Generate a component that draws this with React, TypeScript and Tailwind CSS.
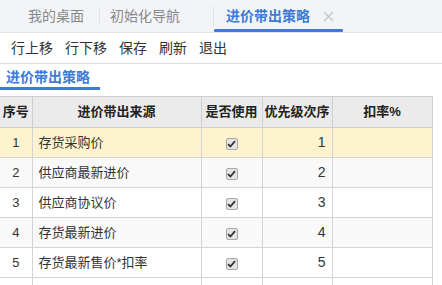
import React from 'react';

const rows = [
  { no: 1, source: '存货采购价', order: 1 },
  { no: 2, source: '供应商最新进价', order: 2 },
  { no: 3, source: '供应商协议价', order: 3 },
  { no: 4, source: '存货最新进价', order: 4 },
  { no: 5, source: '存货最新售价*扣率', order: 5 },
];

function Check() {
  return (
    <span className="inline-flex h-[12px] w-[12px] items-center justify-center rounded-[2px] border border-[#a9a9a9] bg-[#e4e4e4]">
      <svg width="9" height="8" viewBox="0 0 9 8">
        <path d="M1 4.2 L3.4 6.5 L8 1.2" fill="none" stroke="#333" strokeWidth="1.8" />
      </svg>
    </span>
  );
}

export default function App() {
  return (
    <div
      className="h-[285px] w-[442px] overflow-hidden bg-white text-[#333]"
      style={{ fontFamily: '"Liberation Sans", "Noto Sans CJK SC", sans-serif' }}
    >
      {/* top tabs */}
      <div className="flex h-[33px] items-stretch border-b border-[#dfe4ec] bg-[#f2f4f8] text-[14px] text-[#888]">
        <div className="flex items-center pl-[28px] pr-[15px]">我的桌面</div>
        <div className="my-[8px] w-px bg-[#e0e4ea]" />
        <div className="flex items-center pl-[10px] pr-[33px]">初始化导航</div>
        <div className="my-[6px] w-px bg-[#e0e4ea]" />
        <div className="relative flex w-[129px] items-center pl-[12px] font-bold text-[#3c7bd6]">
          进价带出策略
          <svg className="ml-[13px]" width="11" height="11" viewBox="0 0 11 11">
            <path d="M1 1 L10 10 M10 1 L1 10" stroke="#c3c7ce" strokeWidth="1.4" />
          </svg>
          <div className="absolute bottom-[0px] left-0 right-0 h-[3px] rounded-[1px] bg-[#3c7bd6]" />
        </div>
      </div>

      {/* toolbar */}
      <div className="flex h-[31px] items-center gap-[12px] border-b border-[#dcdcdc] pl-[11px] text-[14px] text-[#333]">
        <span>行上移</span>
        <span>行下移</span>
        <span>保存</span>
        <span>刷新</span>
        <span>退出</span>
      </div>

      {/* sub tab */}
      <div className="h-[32px]">
        <div className="relative flex h-[26px] w-[100px] items-center pl-[6px] text-[14px] font-bold text-[#3c7bd6]">
          进价带出策略
          <div className="absolute bottom-0 left-0 right-0 h-[3px] bg-[#3c7bd6]" />
        </div>
      </div>

      {/* grid */}
      <table className="w-[432px] table-fixed border-collapse text-[13px]">
        <colgroup>
          <col className="w-[32px]" />
          <col className="w-[169px]" />
          <col className="w-[61px]" />
          <col className="w-[70px]" />
          <col className="w-[100px]" />
        </colgroup>
        <thead>
          <tr className="h-[31px] bg-[#ebebeb] font-bold text-[#222]">
            <th className="border border-l-0 border-[#cfcfcf] text-center">序号</th>
            <th className="border border-[#cfcfcf] text-center">进价带出来源</th>
            <th className="border border-[#cfcfcf] text-center">是否使用</th>
            <th className="border border-[#cfcfcf] text-center">优先级次序</th>
            <th className="border border-[#cfcfcf] text-center">扣率%</th>
          </tr>
        </thead>
        <tbody>
          {rows.map((r) => (
            <tr
              key={r.no}
              className={`h-[30px] ${r.no === 1 ? 'bg-[#fdf4cf]' : r.no % 2 === 0 ? 'bg-[#f9f9f9]' : 'bg-white'}`}
            >
              <td className="border border-l-0 border-[#d4d4d4] text-center">{r.no}</td>
              <td className="border border-[#d4d4d4] pl-[6px]">{r.source}</td>
              <td className="border border-[#d4d4d4] text-center">
                <span className="inline-flex translate-y-[1px]">
                  <Check />
                </span>
              </td>
              <td className="border border-[#d4d4d4] pr-[6px] text-right text-[14px]">{r.order}</td>
              <td className="border border-[#d4d4d4]" />
            </tr>
          ))}
          <tr className="h-[30px]">
            <td className="border border-l-0 border-[#d4d4d4]" />
            <td className="border border-[#d4d4d4]" />
            <td className="border border-[#d4d4d4]" />
            <td className="border border-[#d4d4d4]" />
            <td className="border border-[#d4d4d4]" />
          </tr>
        </tbody>
      </table>
    </div>
  );
}
